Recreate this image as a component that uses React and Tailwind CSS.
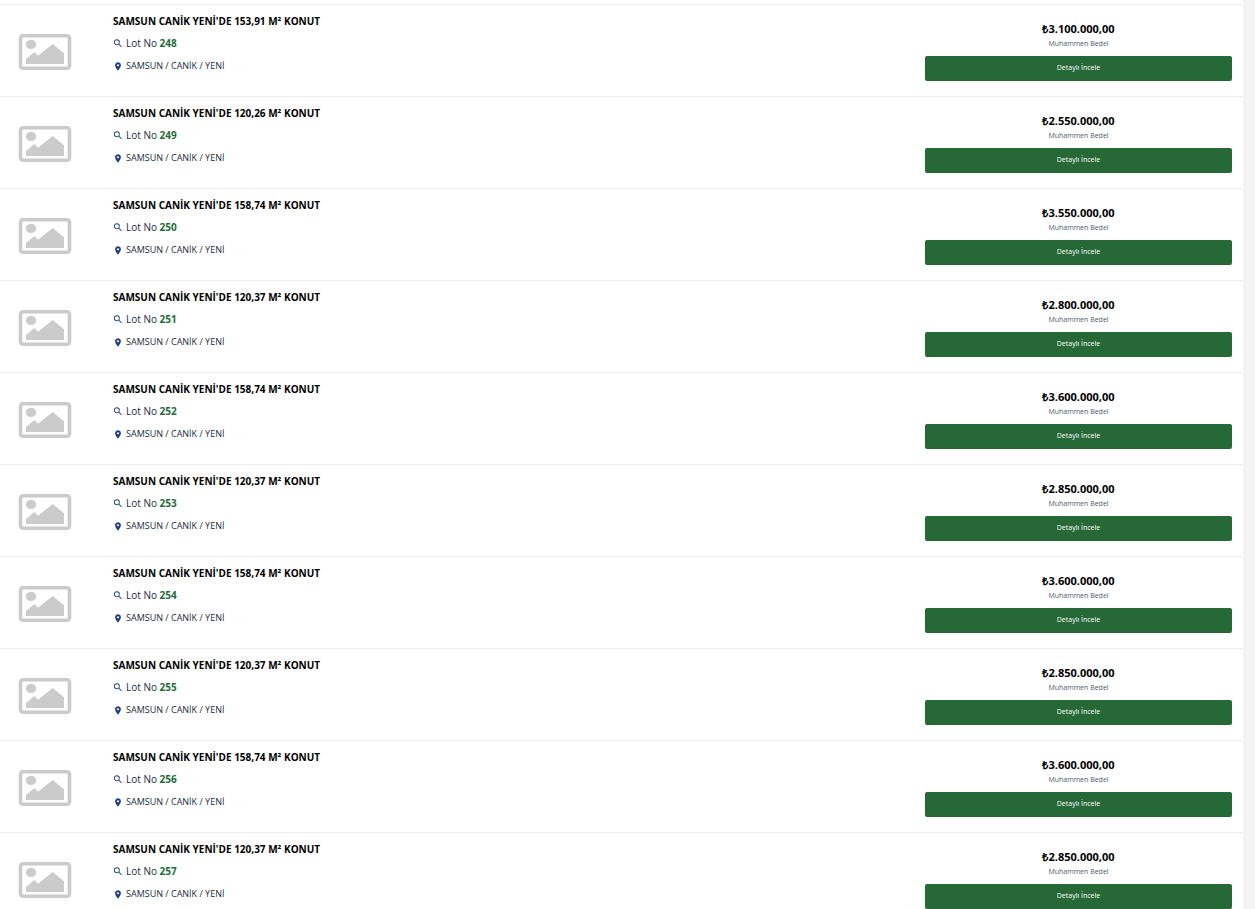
const lots = [
  { no: 248, area: "153,91", price: "3.100.000,00" },
  { no: 249, area: "120,26", price: "2.550.000,00" },
  { no: 250, area: "158,74", price: "3.550.000,00" },
  { no: 251, area: "120,37", price: "2.800.000,00" },
  { no: 252, area: "158,74", price: "3.600.000,00" },
  { no: 253, area: "120,37", price: "2.850.000,00" },
  { no: 254, area: "158,74", price: "3.600.000,00" },
  { no: 255, area: "120,37", price: "2.850.000,00" },
  { no: 256, area: "158,74", price: "3.600.000,00" },
  { no: 257, area: "120,37", price: "2.850.000,00" },
];

function PlaceholderImage() {
  return (
    <svg viewBox="0 0 54 38" className="h-[38px] w-[54px]" aria-hidden="true">
      <rect x="2.5" y="2.7" width="49" height="32.6" rx="2.5" fill="none" stroke="#cbcbcb" strokeWidth="3.6" />
      <ellipse cx="13" cy="11.4" rx="5.2" ry="4.6" fill="#cbcbcb" />
      <path d="M8 31v-5l8.400-7 3.600 3.700L34.700 11 46 20.300V31z" fill="#cbcbcb" />
    </svg>
  );
}

function SearchIcon() {
  return (
    <svg viewBox="1 0 22 22" className="size-[10px] shrink-0" fill="#24407f" aria-hidden="true">
      <path d="M15.500 14h-.79l-.28-.27A6.471 6.471 0 0 0 16 9.500 6.500 6.500 0 1 0 9.500 16c1.610 0 3.090-.59 4.230-1.570l.27.28v.79l5 4.990L20.490 19zm-6 0C7.010 14 5 11.990 5 9.500S7.010 5 9.500 5 14 7.010 14 9.500 11.990 14 9.500 14z" />
    </svg>
  );
}

function PinIcon() {
  return (
    <svg viewBox="0 -1 24 24" className="size-[10px] shrink-0" fill="#24407f" aria-hidden="true">
      <path d="M12 2C8.130 2 5 5.130 5 9c0 5.250 7 13 7 13s7-7.750 7-13c0-3.870-3.130-7-7-7zm0 9.500a2.500 2.500 0 0 1 0-5 2.500 2.500 0 0 1 0 5z" />
    </svg>
  );
}

function LotRow({ lot }) {
  return (
    <li className="flex h-[92px] border-t border-[#ebebeb]">
      <div className="w-[113px] shrink-0 pt-7 pl-[18px]">
        <PlaceholderImage />
      </div>

      <div className="min-w-0 flex-1 pt-2">
        <h2 className="text-[10px] leading-4 font-bold text-black">
          SAMSUN CANİK YENİ'DE {lot.area} M² KONUT
        </h2>
        <p className="mt-1.5 flex items-center gap-[3px] text-[10px] leading-4 text-[#212b3a]">
          <SearchIcon />
          <span>
            Lot No <strong className="font-bold text-[#1f6b3a]">{lot.no}</strong>
          </span>
        </p>
        <p className="mt-[7px] flex items-center gap-[3px] text-[9px] leading-4 text-[#212b3a]">
          <PinIcon />
          SAMSUN / CANİK / YENİ
        </p>
      </div>

      <div className="mr-[11px] w-1/4 max-w-[307px] shrink-0 pt-4 text-center">
        <p className="text-[11px] leading-4 font-bold text-black">₺{lot.price}</p>
        <p className="text-[7px] leading-3.5 text-[#4c5b70]">Muhammen Bedel</p>
        <button
          type="button"
          className="mt-[5px] block h-[25px] w-full rounded-xs bg-[#266937] text-[7px] font-medium text-white hover:bg-[#1f582e]"
        >
          Detaylı İncele
        </button>
      </div>
    </li>
  );
}

export default function App() {
  return (
    <div className="h-screen overflow-hidden bg-[#f3f3f3] pr-3 font-['Open_Sans',sans-serif]">
      <ul className="bg-white pt-1">
        {lots.map((lot) => (
          <LotRow key={lot.no} lot={lot} />
        ))}
      </ul>
    </div>
  );
}
